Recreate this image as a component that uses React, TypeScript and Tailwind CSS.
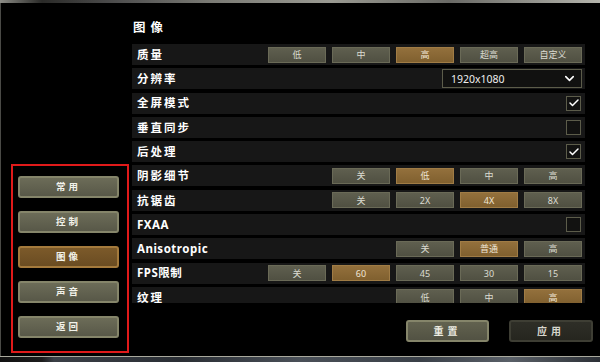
import React from "react";
import { Check, ChevronDown } from "lucide-react";

type Row =
  | { label: string; kind: "opts"; opts: string[]; active: number }
  | { label: string; kind: "select"; value: string }
  | { label: string; kind: "check"; checked: boolean };

const ROWS: Row[] = [
  { label: "质量", kind: "opts", opts: ["低", "中", "高", "超高", "自定义"], active: 2 },
  { label: "分辨率", kind: "select", value: "1920x1080" },
  { label: "全屏模式", kind: "check", checked: true },
  { label: "垂直同步", kind: "check", checked: false },
  { label: "后处理", kind: "check", checked: true },
  { label: "阴影细节", kind: "opts", opts: ["关", "低", "中", "高"], active: 1 },
  { label: "抗锯齿", kind: "opts", opts: ["关", "2X", "4X", "8X"], active: 2 },
  { label: "FXAA", kind: "check", checked: false },
  { label: "Anisotropic", kind: "opts", opts: ["关", "普通", "高"], active: 1 },
  { label: "FPS限制", kind: "opts", opts: ["关", "60", "45", "30", "15"], active: 1 },
  { label: "纹理", kind: "opts", opts: ["低", "中", "高"], active: 2 },
];

const MENU = ["常用", "控制", "图像", "声音", "返回"];

const OptButton = ({ text, active }: { text: string; active: boolean }) => (
  <div
    className={`w-[58px] h-[16px] flex items-center justify-center text-[9px] leading-none border ${
      active
        ? "bg-[linear-gradient(180deg,#93703c,#80602f)] border-[#a07c45] text-[#f0e6d6]"
        : "bg-[linear-gradient(180deg,#5f5f4f,#505042)] border-[#6a6a57] text-[#dcdcd2]"
    }`}
  >
    {text}
  </div>
);

const SettingRow = ({ row }: { row: Row }) => {
  const latin = /^[A-Za-z]/.test(row.label);
  return (
    <div className="h-[21px] shrink-0 flex items-center justify-between bg-[#171717] pl-[5px] pr-[3px]">
      <span
        className={`text-[11.5px] font-bold text-white leading-none ${
          latin ? "tracking-[0.5px]" : "tracking-[2px]"
        }`}
      >
        {row.label}
      </span>
      {row.kind === "opts" && (
        <div className="flex gap-[6px]">
          {row.opts.map((o, i) => (
            <OptButton key={o + i} text={o} active={i === row.active} />
          ))}
        </div>
      )}
      {row.kind === "select" && (
        <div className="w-[140px] h-[19px] border-[1.5px] border-[#5c5c4a] bg-[#111110] flex items-center justify-between pl-[8px] pr-[4px]">
          <span className="text-[10.5px] text-[#eeeeee] leading-none">{row.value}</span>
          <ChevronDown size={15} strokeWidth={2.5} className="text-white" />
        </div>
      )}
      {row.kind === "check" && (
        <div className="w-[15px] h-[15px] mr-[1px] border-[1.5px] border-[#5c5c4a] bg-[#121211] flex items-center justify-center">
          {row.checked ? <Check size={12} strokeWidth={3} className="text-white" /> : null}
        </div>
      )}
    </div>
  );
};

const MenuButton = ({ text, active }: { text: string; active: boolean }) => (
  <div
    className={`w-[101px] h-[22px] rounded-[3px] border-2 flex items-center justify-center text-[9.5px] font-bold tracking-[3px] text-[#f2f2ea] ${
      active
        ? "border-[#a47a3c] bg-[linear-gradient(180deg,#7c5a2a,#6a4c22)]"
        : "border-[#85856a] bg-[linear-gradient(180deg,#6c6c58,#585848)]"
    }`}
  >
    {text}
  </div>
);

export default function App() {
  return (
    <div className="w-[600px] h-[362px] bg-black overflow-hidden flex flex-col font-['Noto_Sans','Noto_Sans_CJK_SC',sans-serif]">
      {/* top strip of the scene behind */}
      <div className="h-[3px] shrink-0 bg-[linear-gradient(90deg,#8c8c86_0%,#2a2a28_7%,#505050_20%,#7a7a74_35%,#9a9a92_55%,#6a6a66_75%,#b4b4ac_100%)]" />

      <div className="flex-1 flex border-l border-[#4a4a46] min-h-0">
        {/* sidebar */}
        <div className="w-[131px] shrink-0 flex flex-col justify-end pl-[10px] pb-[3px]">
          <div className="w-[118px] h-[189px] border-2 border-[#e01a1a] flex flex-col gap-[13px] pt-[10px] pl-[5px]">
            {MENU.map((m) => (
              <MenuButton key={m} text={m} active={m === "图像"} />
            ))}
          </div>
        </div>

        {/* content */}
        <div className="flex-1 flex flex-col pr-[7px]">
          <div className="h-[20px] mt-[15px] mb-[6px] flex items-center pl-[1px]">
            <span className="text-[12.5px] font-bold text-white tracking-[5px] leading-none">图像</span>
          </div>
          <div className="h-[259px] mr-[8px] overflow-hidden flex flex-col gap-[3.3px]">
            {ROWS.map((r) => (
              <SettingRow key={r.label} row={r} />
            ))}
          </div>
          <div className="flex justify-end gap-[20px] mt-[17px]">
            <div className="w-[83px] h-[22px] rounded-[3px] border-2 border-[#85856a] bg-[linear-gradient(180deg,#62624f,#525243)] flex items-center justify-center text-[10px] font-bold tracking-[4px] text-[#ecece2]">
              重置
            </div>
            <div className="w-[84px] h-[22px] rounded-[3px] border-2 border-[#3e3e34] bg-[linear-gradient(180deg,#2e2e27,#26261f)] flex items-center justify-center text-[10px] font-bold tracking-[4px] text-[#d6d6cc]">
              应用
            </div>
          </div>
        </div>
      </div>

      {/* bottom edge and scene behind */}
      <div className="h-[1px] shrink-0 bg-[#a9a99d]" />
      <div className="h-[5px] shrink-0 bg-[linear-gradient(90deg,#111_0%,#1c1c1c_7%,#3a3f46_9%,#2a2e34_30%,#4a5058_50%,#3a4048_70%,#5a6068_85%,#2c3036_100%)]" />
    </div>
  );
}
